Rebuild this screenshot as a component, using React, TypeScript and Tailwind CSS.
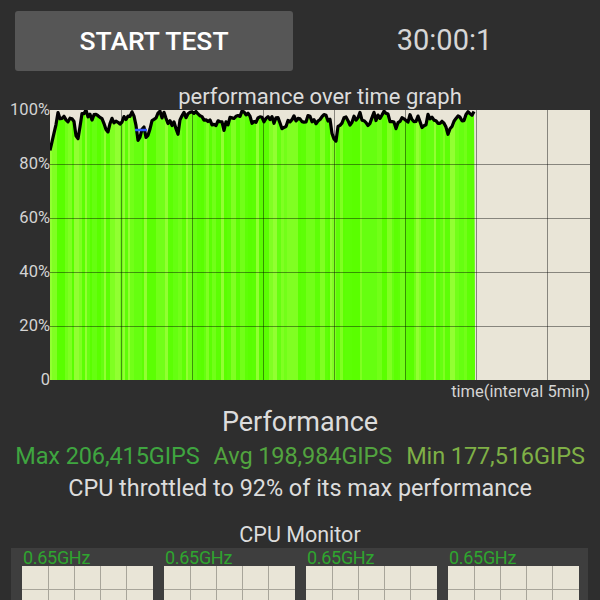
import React from "react";

function makeRng(seed: number) {
  let s = seed;
  return () => {
    s = (s * 16807) % 2147483647;
    return (s - 1) / 2147483646;
  };
}

const PW = 540;
const PH = 270;
const GREEN_END = 425;

const dips: [number, number, number][] = [
  [27, 8, 4],
  [58, 3, 3],
  [89, 9, 3],
  [97, 6, 3],
  [127, 4, 3],
  [175, 4, 4],
  [205, 3, 3],
  [235, 3, 4],
  [285, 9, 3],
  [318, 3, 4],
  [345, 4, 3],
  [372, 3, 3],
  [398, 4, 3],
];

function buildData() {
  const r = makeRng(12345);
  const pts: [number, number][] = [];
  let walk = 0;
  for (let x = 0; x <= GREEN_END; x += 2) {
    walk = walk * 0.55 + (r() - 0.5) * 3.4;
    let v = 97.0 + walk + (r() - 0.5) * 1.8;
    for (const [cx, depth, w] of dips) {
      const d = (x - cx) / w;
      v -= depth * Math.exp(-d * d);
    }
    if (x < 8) v = Math.min(v, 85 + x * 1.6);
    if (v > 100) v = 100;
    pts.push([x, (100 - v) * (PH / 100)]);
  }
  return pts;
}

const data = buildData();

const stripes = (() => {
  const r = makeRng(987);
  const palette = ["#5aff00", "#5eff06", "#66ff10", "#72ff18", "#80ff22", "#92ff32", "#5cff03"];
  const out: { x: number; w: number; c: string }[] = [];
  let x = 0;
  while (x < GREEN_END) {
    const w = 2 + Math.floor(r() * 4);
    const c = palette[Math.floor(r() * palette.length)];
    out.push({ x, w, c });
    x += w;
  }
  return out;
})();

function Chart() {
  const linePts = data.map(([x, y]) => `${x},${y.toFixed(1)}`).join(" ");
  const areaPts = `0,${PH} ${linePts} ${GREEN_END},${PH}`;
  const vlines = [71, 142, 213, 284, 355, 426, 497];
  const hlines = [54, 108, 162, 216];
  return (
    <svg width={PW} height={PH} viewBox={`0 0 ${PW} ${PH}`} className="block shrink-0">
      <defs>
        <clipPath id="area">
          <polygon points={areaPts} />
        </clipPath>
      </defs>
      <rect x={0} y={0} width={PW} height={PH} fill="#e9e5d7" />
      <g clipPath="url(#area)" shapeRendering="crispEdges">
        <rect x={0} y={0} width={GREEN_END} height={PH} fill="#5eff06" />
        {stripes.map((s, i) => (
          <rect key={i} x={s.x} y={0} width={s.w} height={PH} fill={s.c} />
        ))}
      </g>
      {vlines.map((x) => (
        <line key={x} x1={x + 0.5} y1={0} x2={x + 0.5} y2={PH} stroke="rgba(0,0,0,0.42)" strokeWidth={1} />
      ))}
      {hlines.map((y) => (
        <line key={y} x1={0} y1={y + 0.5} x2={PW} y2={y + 0.5} stroke="rgba(0,0,0,0.42)" strokeWidth={1} />
      ))}
      <polyline points={linePts} fill="none" stroke="#000" strokeWidth={3.2} strokeLinejoin="round" />
      <line x1={85} y1={20} x2={97} y2={20} stroke="#3355ff" strokeWidth={2.5} />
    </svg>
  );
}

function CpuCell() {
  return (
    <div className="flex flex-col w-[131px]">
      <div className="h-[17px] leading-[18px] text-[18px] text-[#2fa52f] pl-[1px] tracking-[-0.3px]">0.65GHz</div>
      <svg width={131} height={60} className="block">
        <rect x={0} y={0} width={131} height={60} fill="#e9e5d7" />
        {[26, 52, 78, 104].map((x) => (
          <line key={x} x1={x + 0.5} y1={0} x2={x + 0.5} y2={60} stroke="#a8a59a" strokeWidth={1} />
        ))}
        <line x1={0} y1={23.5} x2={131} y2={23.5} stroke="#a8a59a" strokeWidth={1} />
        <line x1={0} y1={46.5} x2={131} y2={46.5} stroke="#a8a59a" strokeWidth={1} />
      </svg>
    </div>
  );
}

export default function App() {
  const yLabels = ["100%", "80%", "60%", "40%", "20%", "0"];
  return (
    <div
      className="w-[600px] h-[600px] overflow-hidden bg-[#2e2e2e] text-[#dcdcdc]"
      style={{ fontFamily: "Roboto, 'Noto Sans', sans-serif" }}
    >
      <div className="flex items-center pt-[11px] pl-[15px]">
        <div className="w-[278px] h-[60px] rounded-[3px] bg-[#565656] flex items-center justify-center text-white text-[26.5px] font-medium">
          START TEST
        </div>
        <div className="flex-1 text-center text-[29px] pr-[4px] text-[#d6d6d6]">30:00:1</div>
      </div>

      <div className="mt-[14px] pl-[50px] w-[590px] text-center text-[22px] leading-[24px] h-[25px] whitespace-nowrap">
        performance over time graph
      </div>

      <div className="flex">
        <div className="w-[50px] h-[288px] mt-[-9px] mb-[-9px] flex flex-col justify-between items-end text-[16.5px] leading-[18px] text-[#d4d4d4]">
          {yLabels.map((l) => (
            <div key={l}>{l}</div>
          ))}
        </div>
        <Chart />
      </div>

      <div className="w-[590px] text-right text-[16.5px] leading-[20px] mt-[2px] text-[#d4d4d4]">time(interval 5min)</div>

      <div className="text-center text-[27px] leading-[30px] mt-[5px]">Performance</div>
      <div className="flex justify-center gap-[14px] text-[23.5px] leading-[28px] mt-[5px] tracking-[-0.1px] whitespace-nowrap">
        <span className="text-[#3fa540]">Max 206,415GIPS</span>
        <span className="text-[#52a43f]">Avg 198,984GIPS</span>
        <span className="text-[#7fb046]">Min 177,516GIPS</span>
      </div>
      <div className="text-center text-[23.4px] leading-[28px] mt-[4px] whitespace-nowrap">CPU throttled to 92% of its max performance</div>

      <div className="text-center text-[21.5px] leading-[26px] mt-[20px]">CPU Monitor</div>
      <div className="ml-[11px] w-[577px] bg-[#3e3e3e] pt-[1px] pl-[11px] flex gap-[11px]">
        <CpuCell />
        <CpuCell />
        <CpuCell />
        <CpuCell />
      </div>
    </div>
  );
}
